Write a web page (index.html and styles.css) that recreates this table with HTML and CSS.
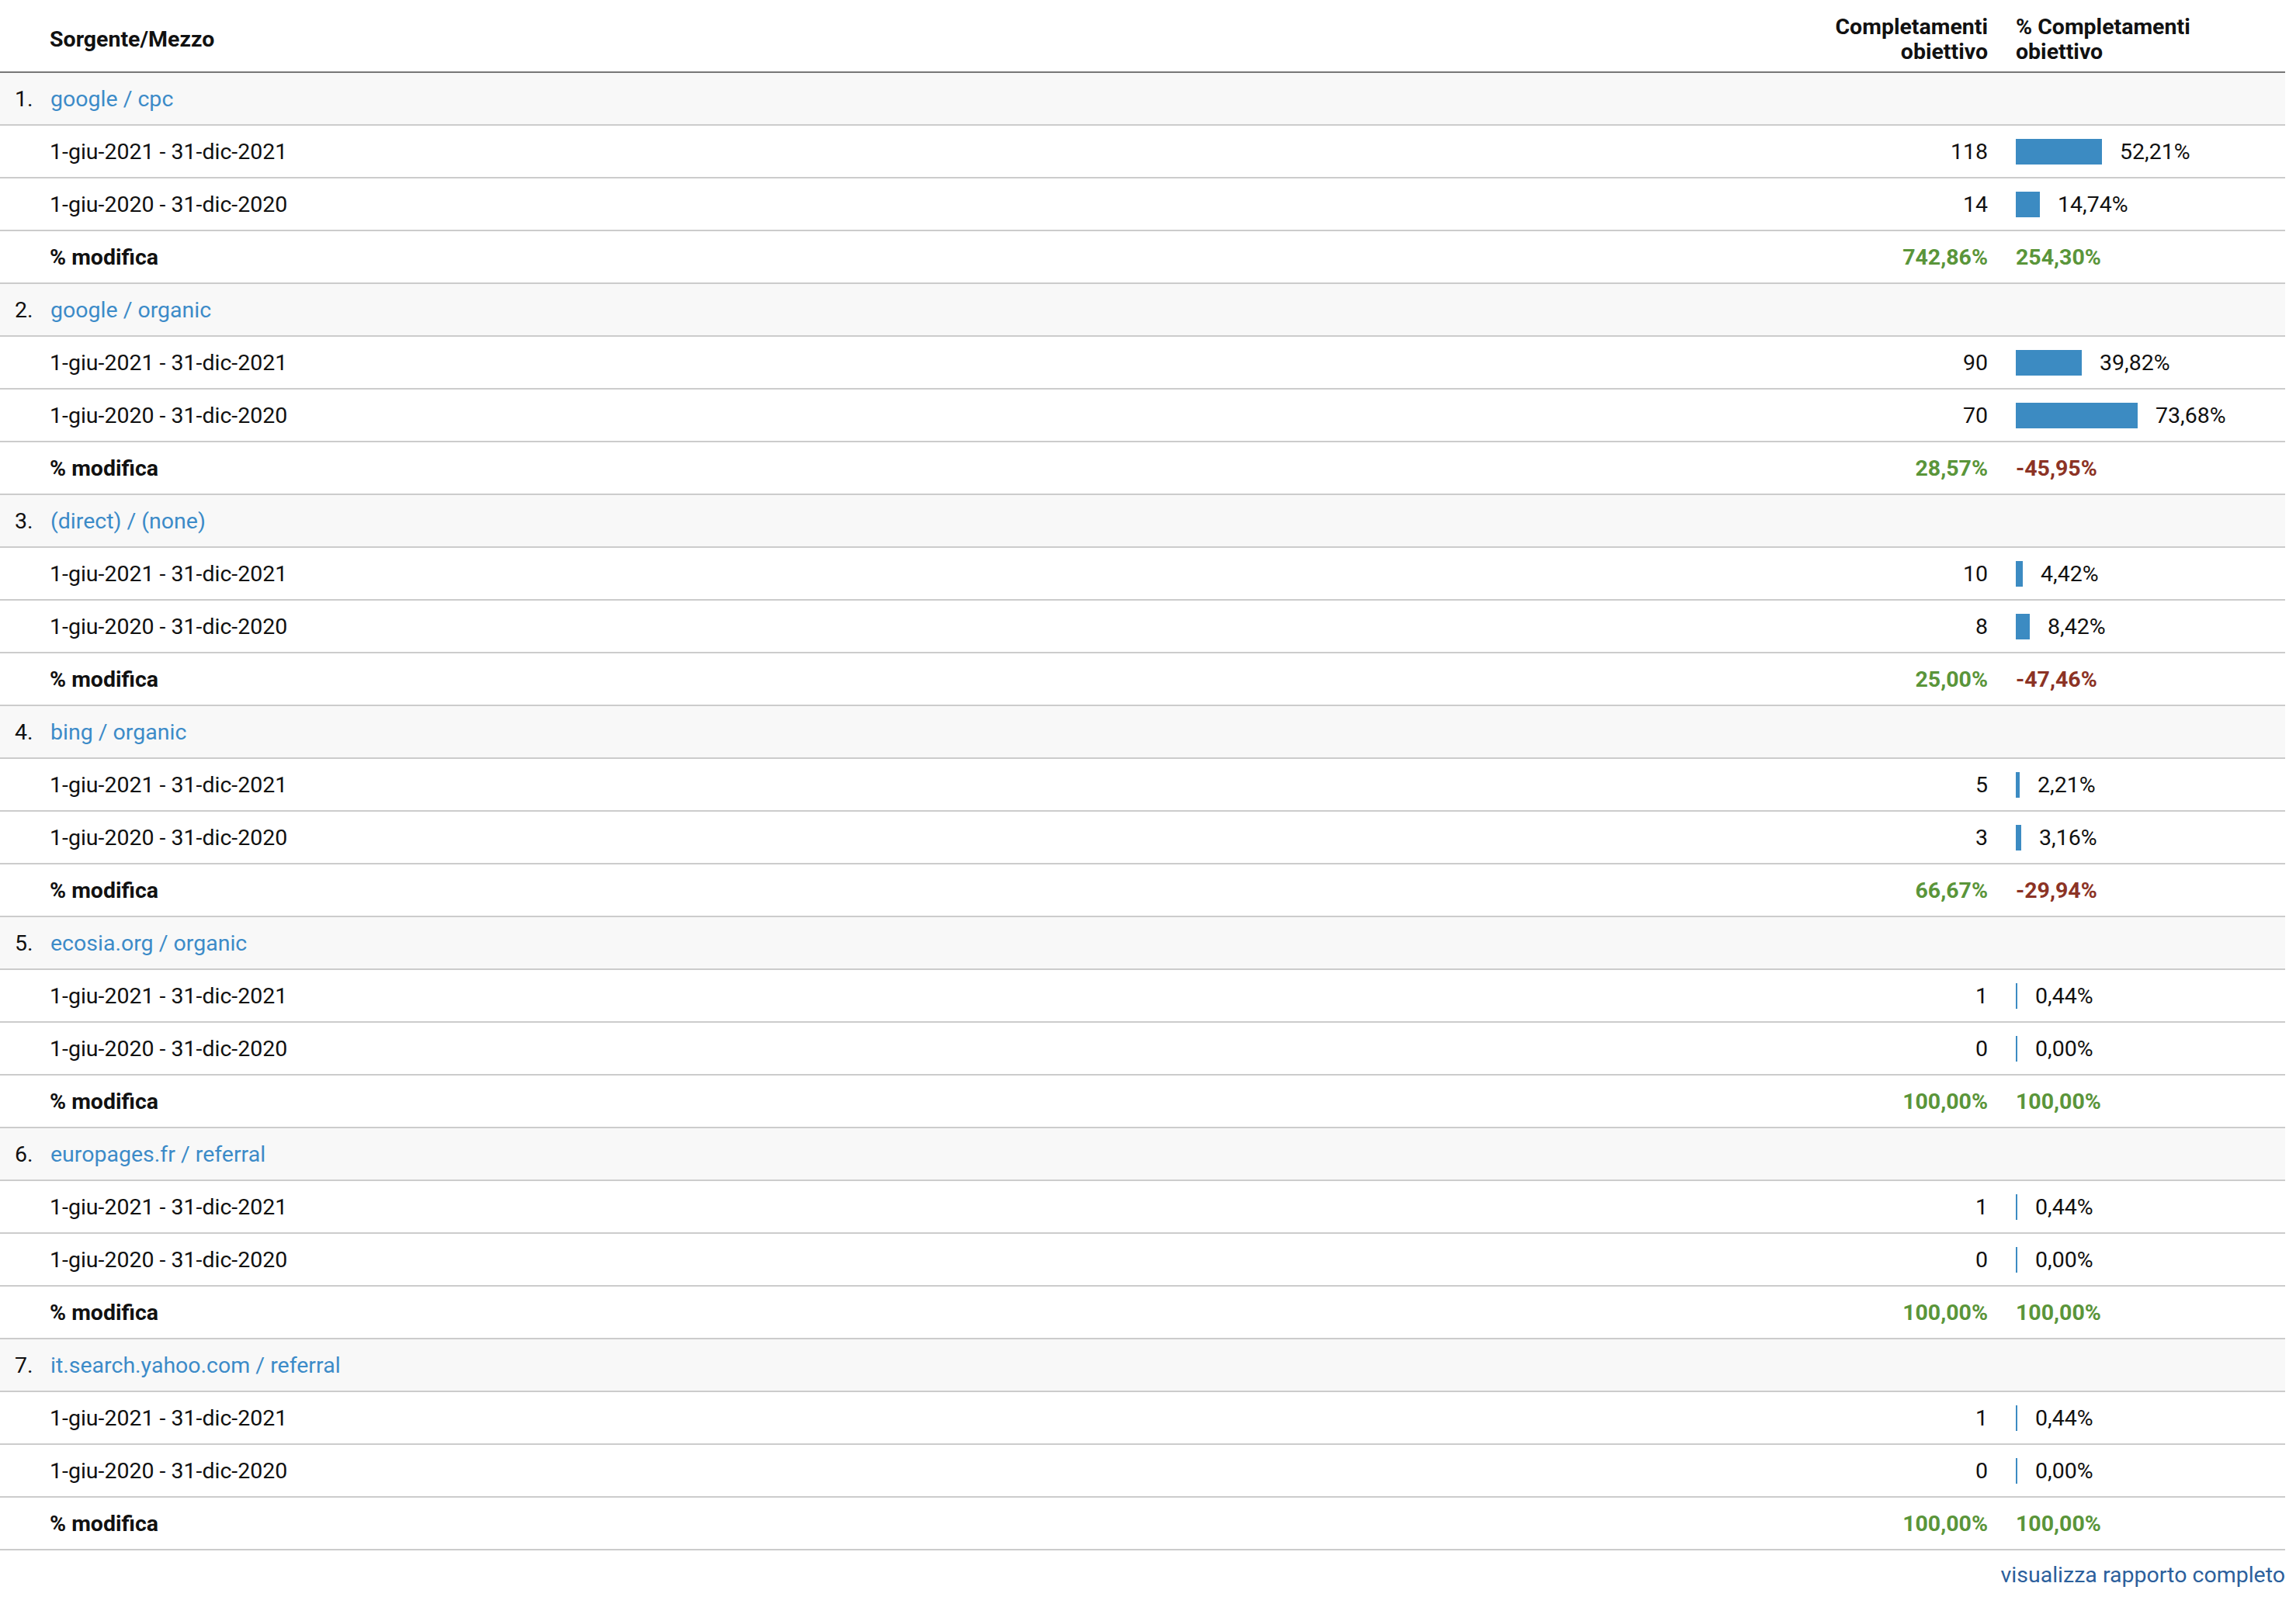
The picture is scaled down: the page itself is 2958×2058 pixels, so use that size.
FILE: index.html
```html
<!DOCTYPE html>
<html lang="it">
<head>
    <meta charset="UTF-8">
    <title>Sorgente/Mezzo</title>
    <link rel="stylesheet" href="styles.css">
</head>
<body>
    <div class="report">
        <div class="row head">
            <div class="cell name">Sorgente/Mezzo</div>
            <div class="cell num">Completamenti<br>obiettivo</div>
            <div class="cell pct">% Completamenti<br>obiettivo</div>
        </div>

        <!-- 1 -->
        <div class="row group">
            <div class="cell src"><span class="idx">1.</span><a href="#">google / cpc</a></div>
            <div class="cell num"></div>
            <div class="cell pct"></div>
        </div>
        <div class="row">
            <div class="cell name">1-giu-2021 - 31-dic-2021</div>
            <div class="cell num">118</div>
            <div class="cell pct"><span class="bar" style="width:111px"></span>52,21%</div>
        </div>
        <div class="row">
            <div class="cell name">1-giu-2020 - 31-dic-2020</div>
            <div class="cell num">14</div>
            <div class="cell pct"><span class="bar" style="width:31px"></span>14,74%</div>
        </div>
        <div class="row change">
            <div class="cell name">% modifica</div>
            <div class="cell num up">742,86%</div>
            <div class="cell pct up">254,30%</div>
        </div>

        <!-- 2 -->
        <div class="row group">
            <div class="cell src"><span class="idx">2.</span><a href="#">google / organic</a></div>
            <div class="cell num"></div>
            <div class="cell pct"></div>
        </div>
        <div class="row">
            <div class="cell name">1-giu-2021 - 31-dic-2021</div>
            <div class="cell num">90</div>
            <div class="cell pct"><span class="bar" style="width:85px"></span>39,82%</div>
        </div>
        <div class="row">
            <div class="cell name">1-giu-2020 - 31-dic-2020</div>
            <div class="cell num">70</div>
            <div class="cell pct"><span class="bar" style="width:157px"></span>73,68%</div>
        </div>
        <div class="row change">
            <div class="cell name">% modifica</div>
            <div class="cell num up">28,57%</div>
            <div class="cell pct down">-45,95%</div>
        </div>

        <!-- 3 -->
        <div class="row group">
            <div class="cell src"><span class="idx">3.</span><a href="#">(direct) / (none)</a></div>
            <div class="cell num"></div>
            <div class="cell pct"></div>
        </div>
        <div class="row">
            <div class="cell name">1-giu-2021 - 31-dic-2021</div>
            <div class="cell num">10</div>
            <div class="cell pct"><span class="bar" style="width:9px"></span>4,42%</div>
        </div>
        <div class="row">
            <div class="cell name">1-giu-2020 - 31-dic-2020</div>
            <div class="cell num">8</div>
            <div class="cell pct"><span class="bar" style="width:18px"></span>8,42%</div>
        </div>
        <div class="row change">
            <div class="cell name">% modifica</div>
            <div class="cell num up">25,00%</div>
            <div class="cell pct down">-47,46%</div>
        </div>

        <!-- 4 -->
        <div class="row group">
            <div class="cell src"><span class="idx">4.</span><a href="#">bing / organic</a></div>
            <div class="cell num"></div>
            <div class="cell pct"></div>
        </div>
        <div class="row">
            <div class="cell name">1-giu-2021 - 31-dic-2021</div>
            <div class="cell num">5</div>
            <div class="cell pct"><span class="bar" style="width:5px"></span>2,21%</div>
        </div>
        <div class="row">
            <div class="cell name">1-giu-2020 - 31-dic-2020</div>
            <div class="cell num">3</div>
            <div class="cell pct"><span class="bar" style="width:7px"></span>3,16%</div>
        </div>
        <div class="row change">
            <div class="cell name">% modifica</div>
            <div class="cell num up">66,67%</div>
            <div class="cell pct down">-29,94%</div>
        </div>

        <!-- 5 -->
        <div class="row group">
            <div class="cell src"><span class="idx">5.</span><a href="#">ecosia.org / organic</a></div>
            <div class="cell num"></div>
            <div class="cell pct"></div>
        </div>
        <div class="row">
            <div class="cell name">1-giu-2021 - 31-dic-2021</div>
            <div class="cell num">1</div>
            <div class="cell pct"><span class="bar" style="width:2px"></span>0,44%</div>
        </div>
        <div class="row">
            <div class="cell name">1-giu-2020 - 31-dic-2020</div>
            <div class="cell num">0</div>
            <div class="cell pct"><span class="bar" style="width:2px"></span>0,00%</div>
        </div>
        <div class="row change">
            <div class="cell name">% modifica</div>
            <div class="cell num up">100,00%</div>
            <div class="cell pct up">100,00%</div>
        </div>

        <!-- 6 -->
        <div class="row group">
            <div class="cell src"><span class="idx">6.</span><a href="#">europages.fr / referral</a></div>
            <div class="cell num"></div>
            <div class="cell pct"></div>
        </div>
        <div class="row">
            <div class="cell name">1-giu-2021 - 31-dic-2021</div>
            <div class="cell num">1</div>
            <div class="cell pct"><span class="bar" style="width:2px"></span>0,44%</div>
        </div>
        <div class="row">
            <div class="cell name">1-giu-2020 - 31-dic-2020</div>
            <div class="cell num">0</div>
            <div class="cell pct"><span class="bar" style="width:2px"></span>0,00%</div>
        </div>
        <div class="row change">
            <div class="cell name">% modifica</div>
            <div class="cell num up">100,00%</div>
            <div class="cell pct up">100,00%</div>
        </div>

        <!-- 7 -->
        <div class="row group">
            <div class="cell src"><span class="idx">7.</span><a href="#">it.search.yahoo.com / referral</a></div>
            <div class="cell num"></div>
            <div class="cell pct"></div>
        </div>
        <div class="row">
            <div class="cell name">1-giu-2021 - 31-dic-2021</div>
            <div class="cell num">1</div>
            <div class="cell pct"><span class="bar" style="width:2px"></span>0,44%</div>
        </div>
        <div class="row">
            <div class="cell name">1-giu-2020 - 31-dic-2020</div>
            <div class="cell num">0</div>
            <div class="cell pct"><span class="bar" style="width:2px"></span>0,00%</div>
        </div>
        <div class="row change">
            <div class="cell name">% modifica</div>
            <div class="cell num up">100,00%</div>
            <div class="cell pct up">100,00%</div>
        </div>

        <div class="footer">
            <a href="#">visualizza rapporto completo</a>
        </div>
    </div>
</body>
</html>
```

FILE: styles.css
```css
body {
    margin: 0;
    background-color: #fff;
    font-family: Roboto, "Liberation Sans", sans-serif;
    font-size: 28.5px;
    color: #111;
}
.report {
    width: 2944px;
}
.row {
    display: grid;
    grid-template-columns: 1fr 300px 365px;
    align-items: center;
    height: 66px;
    border-bottom: 2px solid #ccc;
}
.row.head {
    height: 82px;
    padding-top: 10px;
    border-bottom: 2px solid #777;
    font-weight: bold;
    line-height: 32px;
}
.row.group {
    background-color: #f8f8f8;
}
.cell {
    white-space: nowrap;
}
.name {
    padding-left: 64px;
}
.src {
    padding-left: 19px;
}
.idx {
    display: inline-block;
    width: 46px;
}
.src a {
    color: #3c8bc8;
    text-decoration: none;
}
.num {
    text-align: right;
    padding-right: 18px;
}
.pct {
    padding-left: 18px;
    display: flex;
    align-items: center;
}
.head .pct {
    display: block;
}
.bar {
    display: inline-block;
    height: 33px;
    margin-right: 23px;
    background-color: #3c8bc2;
}
.change {
    font-weight: bold;
}
.up {
    color: #5a953a;
}
.down {
    color: #8c3325;
}
.footer {
    text-align: right;
    padding-top: 15px;
    line-height: 34px;
}
.footer a {
    color: #2c609c;
    text-decoration: none;
}
```
